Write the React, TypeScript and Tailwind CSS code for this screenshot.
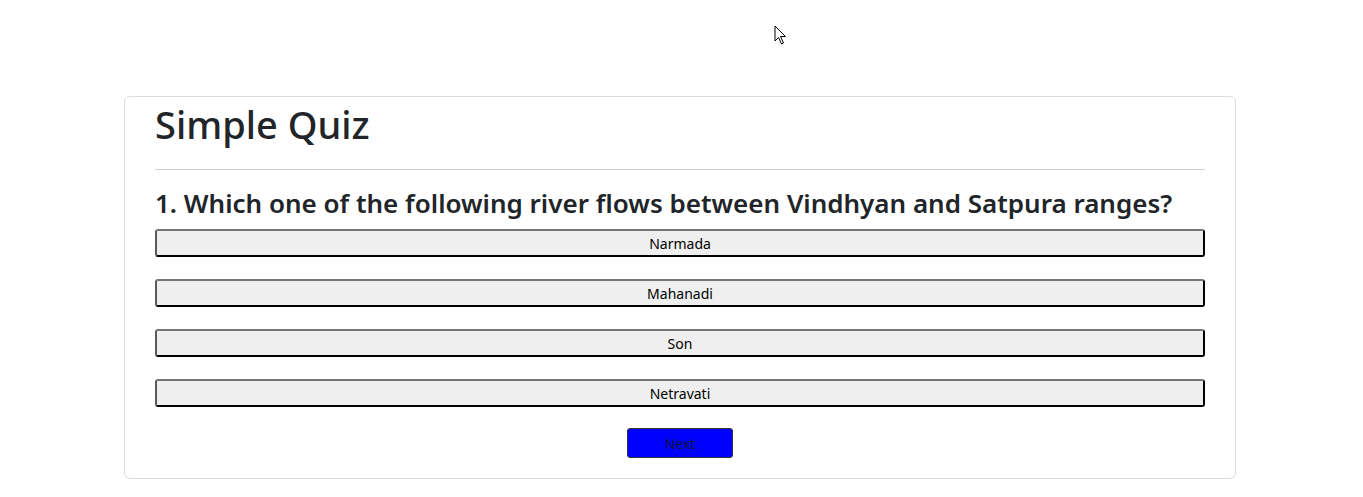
import React from 'react';

const options = ['Narmada', 'Mahanadi', 'Son', 'Netravati'];

export default function App() {
  return (
    <div className="relative h-[497px] bg-white pt-[96px] font-['Noto_Sans',sans-serif] text-[#212529]">
      {/* cursor */}
      <svg className="absolute left-[774px] top-[25px]" width="14" height="20" viewBox="0 0 14 20">
        <path d="M1 1 L1 16 L4.5 12.5 L7.5 19 L9.5 18 L6.5 11.5 L11.5 11.5 Z" fill="white" stroke="black" strokeWidth="1" strokeLinejoin="round" />
      </svg>

      <div className="ml-[124px] mr-[127px] rounded-md border border-[#dcdcdc] px-[30px] pb-[20px]">
        <h1 className="text-[38px] font-medium leading-[54px]">Simple Quiz</h1>
        <hr className="mt-[18px] border-[#cfcfcf]" />
        <h2 className="mt-[16px] text-[26px] font-semibold leading-[34px]">
          1. Which one of the following river flows between Vindhyan and Satpura ranges?
        </h2>
        <div className="mt-[9px] flex flex-col gap-[22px]">
          {options.map((o) => (
            <button
              key={o}
              className="h-[28px] w-full rounded-[3px] border-2 border-t-[#767676] border-l-[#5a5a5a] border-r-black border-b-black bg-[#efefef] text-[14px] text-black"
            >
              {o}
            </button>
          ))}
        </div>
        <div className="mt-[21px] flex justify-center">
          <button className="h-[30px] w-[106px] rounded-[3px] border border-[#333] bg-[#0000ff] text-[14px] text-[#111133]">
            Next
          </button>
        </div>
      </div>
    </div>
  );
}
